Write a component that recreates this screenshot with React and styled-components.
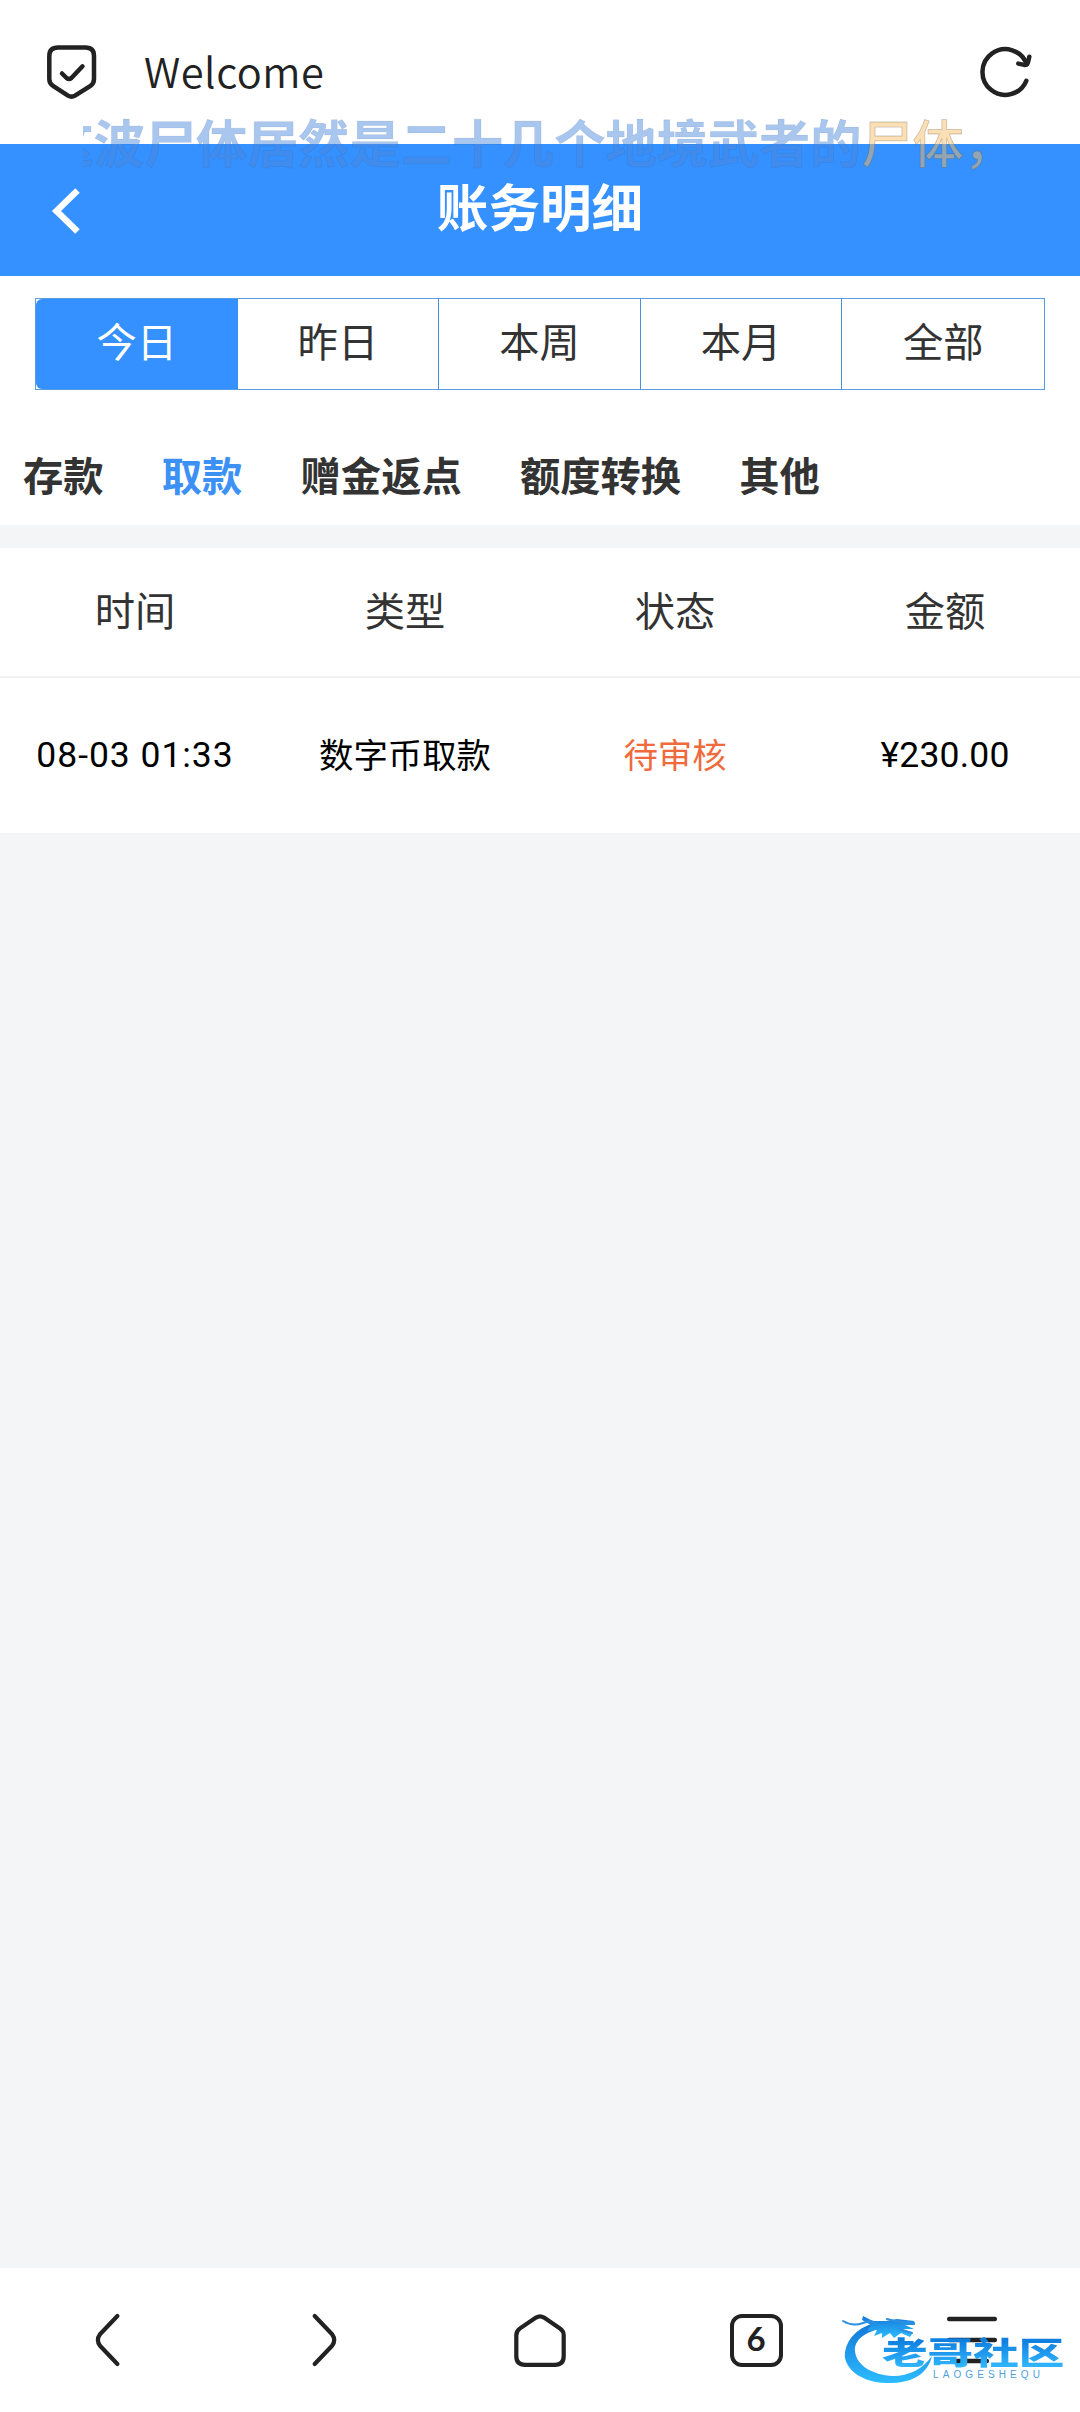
import React from "react";
import styled, { createGlobalStyle } from "styled-components";

const GlobalStyle = createGlobalStyle`
  *, *::before, *::after { box-sizing: border-box; }
  html, body { margin: 0; padding: 0; }
  body {
    background: #f4f5f7;
    font-family: "Noto Sans CJK SC", "Noto Sans", sans-serif;
    color: #333;
  }
  button { font: inherit; border: 0; padding: 0; background: none; }
`;

const INK = "#222222";
const BLUE = "#3491ff";

const Page = styled.div`
  position: relative;
  display: flex;
  flex-direction: column;
  width: 1080px;
  height: 2412px;
  overflow: hidden;
  background: #f4f5f7;
`;

const AddressBar = styled.header`
  display: flex;
  align-items: center;
  height: 144px;
  padding: 0 46px 0 44px;
  background: #fff;
`;

const SiteTitle = styled.span`
  flex: 1;
  padding: 0 0 4px 44px;
  font-size: 41.6px;
  font-weight: 350;
  line-height: 60px;
  letter-spacing: 0.5px;
  color: ${INK};
`;

const TitleBar = styled.div`
  display: grid;
  grid-template-columns: 130px 1fr 130px;
  align-items: center;
  height: 132px;
  background: ${BLUE};
`;

const BackButton = styled.button`
  display: flex;
  padding: 2px 0 0 48px;
`;

const PageTitle = styled.h1`
  margin: 0;
  padding-bottom: 11px;
  font-size: 51.6px;
  line-height: 60px;
  font-weight: 700;
  text-align: center;
  color: #fff;
`;

const Filters = styled.section`
  display: flex;
  flex-direction: column;
  height: 249px;
  padding-top: 22px;
  background: #fff;
`;

const RangeTabs = styled.div`
  display: grid;
  grid-template-columns: repeat(5, 1fr);
  height: 92px;
  margin: 0 35px;
  border: 1px solid #5a9bdc;
`;

const RangeTab = styled.button`
  padding-bottom: 8px;
  border-right: ${(p) => (p.$plain ? "0" : "1px solid #4a8fdc")};
  border-radius: ${(p) => (p.$active ? "6px 0 0 6px" : "0")};
  background: ${(p) => (p.$active ? BLUE : "#fff")};
  color: ${(p) => (p.$active ? "#fff" : "#333")};
  font-size: 40.3px;
  line-height: 60px;
`;

const CategoryTabs = styled.nav`
  display: flex;
  gap: 58.2px;
  margin-top: 54px;
  padding-left: 23px;
`;

const Category = styled.button`
  font-size: 40.3px;
  font-weight: 700;
  line-height: 60px;
  white-space: nowrap;
  color: ${(p) => (p.$active ? "#3d91f5" : "#333")};
`;

const Ledger = styled.section`
  margin-top: 23px;
  background: #fff;
`;

const LedgerRow = styled.div`
  display: grid;
  grid-template-columns: repeat(4, 270px);
  align-items: center;
  height: ${(p) => (p.$head ? "130px" : "155px")};
  padding-bottom: 6px;
  border-bottom: ${(p) => (p.$head ? "2px solid #f1f2f3" : "0")};
  font-size: ${(p) => (p.$head ? "40.3px" : "34.4px")};
  color: ${(p) => (p.$head ? "#333" : "#000")};
  text-align: center;
`;

const Cell = styled.span`
  line-height: 60px;
  white-space: nowrap;
  color: ${(p) => (p.$pending ? "#ef6a3c" : "inherit")};
`;

const Figure = styled(Cell)`
  padding-top: 5px;
  font-family: Roboto, "Noto Sans CJK SC", sans-serif;
  font-size: 35.5px;
  letter-spacing: ${(p) => p.$spacing || "0"};
`;

const BottomNav = styled.nav`
  display: grid;
  grid-template-columns: repeat(5, 1fr);
  align-items: center;
  justify-items: center;
  height: 144px;
  margin-top: auto;
  background: #fff;
`;

const NavButton = styled.button`
  display: flex;
`;

const TabCount = styled.button`
  display: flex;
  align-items: center;
  justify-content: center;
  width: 53px;
  height: 53px;
  padding-bottom: 3px;
  border: 4.5px solid ${INK};
  border-radius: 12px;
  color: ${INK};
  font-family: Lato, sans-serif;
  font-size: 33px;
  font-weight: 700;
  line-height: 1;
`;

const Ticker = styled.div`
  position: absolute;
  top: 106px;
  left: 83px;
  width: 932px;
  height: 76px;
  overflow: hidden;
  display: flex;
  justify-content: flex-end;
  font-size: 51.2px;
  line-height: 70px;
  white-space: nowrap;
  pointer-events: none;
`;

const Sung = styled.span`
  font-weight: 700;
  color: rgba(75, 135, 219, 0.48);
  -webkit-text-stroke: 0.6px rgba(40, 80, 140, 0.15);
`;

const Unsung = styled.span`
  font-weight: 500;
  color: rgba(248, 188, 100, 0.48);
  -webkit-text-stroke: 0.8px rgba(90, 80, 60, 0.3);
`;

const Watermark = styled.div`
  position: absolute;
  left: 841px;
  top: 2309px;
  width: 236px;
  height: 84px;
  pointer-events: none;
`;

const Dragon = styled.svg`
  position: absolute;
  left: 0;
  top: 0;
`;

const BrandName = styled.div`
  position: absolute;
  left: 41px;
  top: 21px;
  font-size: 31px;
  line-height: 42px;
  font-weight: 900;
  white-space: nowrap;
  transform: scaleX(1.47);
  transform-origin: 0 50%;
  background: linear-gradient(#0f7fe0 25%, #2fb4fb 85%);
  background-clip: text;
  -webkit-background-clip: text;
  color: transparent;
`;

const BrandLatin = styled.div`
  position: absolute;
  left: 92px;
  top: 60px;
  font-family: "Liberation Sans", sans-serif;
  font-size: 10px;
  line-height: 12px;
  letter-spacing: 4.1px;
  color: #4f9fdc;
`;

const stroke = {
  fill: "none",
  stroke: INK,
  strokeWidth: 4.5,
  strokeLinecap: "round",
  strokeLinejoin: "round",
};

const ShieldIcon = () => (
  <svg width="56" height="60" viewBox="44 43 56 60" {...stroke}>
    <path d="M58 48.5H85.5Q94 48.5 94 57V80Q94 84.5 90.5 86.8L75 96.6Q71.5 98.7 68 96.6L53 86.8Q49.3 84.5 49.3 80V57Q49.3 48.5 58 48.5Z" />
    <path d="M62 74.5L66.6 79Q69 81 71.4 79L82.5 67.3" />
  </svg>
);

const ReloadIcon = () => (
  <svg width="56" height="60" viewBox="978 42 56 60" {...stroke}>
    <path d="M1026.3 80.8A22.8 22.8 0 1 1 1026.8 64.5" />
    <path d="M1018.3 63.6L1024.2 64.9Q1027 65.2 1027.9 62.6L1029.3 56.8" />
  </svg>
);

const BackIcon = () => (
  <svg width="34" height="50" viewBox="48 186 34 50" fill="none" stroke="#fff" strokeWidth="6.4">
    <path d="M77.5 190.5L56.5 211L77.5 231.5" />
  </svg>
);

const PrevIcon = () => (
  <svg width="60" height="60" viewBox="0 0 60 60" {...stroke} strokeWidth="4.2">
    <path d="M39.4 6L22 24.2Q17.8 30 22 35.8L39.4 54" />
  </svg>
);

const NextIcon = () => (
  <svg width="60" height="60" viewBox="0 0 60 60" {...stroke} strokeWidth="4.2">
    <path d="M20.7 6L38.1 24.2Q42.3 30 38.1 35.8L20.7 54" />
  </svg>
);

const HomeIcon = () => (
  <svg width="60" height="60" viewBox="0 0 60 60" {...stroke} strokeWidth="4.2">
    <path d="M26 7.6Q30 5.2 34 7.6L50 18.4Q53.7 21 53.7 25.4V46Q53.7 54.8 45 54.8H15Q6.3 54.8 6.3 46V25.4Q6.3 21 10 18.4Z" />
  </svg>
);

const MenuIcon = () => (
  <svg width="60" height="60" viewBox="0 0 60 60" {...stroke}>
    <path d="M7.2 9H52.8M7.2 30H52.8M15.2 51H44.8" />
  </svg>
);

const DragonMark = () => (
  <Dragon width="100" height="84" viewBox="0 0 100 84">
    <defs>
      <linearGradient id="dragonFill" x1="0" y1="0" x2="0" y2="1">
        <stop offset="0" stopColor="#1478d8" />
        <stop offset="1" stopColor="#2cbcff" />
      </linearGradient>
    </defs>
    <g fill="url(#dragonFill)">
      <path d="M30 15C11 22 3 36 4 49C8 66 28 75 52 74C73 73 87 64 91 47C82 60 68 67 52 67C31 66 15 56 14 42C13 31 24 23 39 20Z" />
      <path d="M22 7L32 12L45 12L56 10L73 12L74 16L64 16L73 20L62 20L71 25L69 28L60 24L53 29L49 24L41 29L41 24L33 27L36 21L26 22L30 16L21 11Z" />
    </g>
    <path
      d="M2 12Q12 18 22 14T34 15M46 10Q60 14 73 14M58 20L71 24"
      fill="none"
      stroke="#2e8ee0"
      strokeWidth="2"
      strokeLinecap="round"
    />
  </Dragon>
);

const ranges = ["今日", "昨日", "本周", "本月", "全部"];
const categories = ["存款", "取款", "赠金返点", "额度转换", "其他"];
const columns = ["时间", "类型", "状态", "金额"];

export default function App() {
  return (
    <>
      <GlobalStyle />
      <Page>
        <AddressBar>
          <ShieldIcon />
          <SiteTitle>Welcome</SiteTitle>
          <ReloadIcon />
        </AddressBar>

        <TitleBar>
          <BackButton aria-label="返回">
            <BackIcon />
          </BackButton>
          <PageTitle>账务明细</PageTitle>
        </TitleBar>

        <Filters>
          <RangeTabs>
            {ranges.map((label, i) => (
              <RangeTab
                key={label}
                $plain={i === 0 || i === ranges.length - 1}
                $active={i === 0}
              >
                {label}
              </RangeTab>
            ))}
          </RangeTabs>
          <CategoryTabs>
            {categories.map((label, i) => (
              <Category key={label} $active={i === 1}>
                {label}
              </Category>
            ))}
          </CategoryTabs>
        </Filters>

        <Ledger>
          <LedgerRow $head>
            {columns.map((label) => (
              <Cell key={label}>{label}</Cell>
            ))}
          </LedgerRow>
          <LedgerRow>
            <Figure $spacing="0.95px">08-03 01:33</Figure>
            <Cell>数字币取款</Cell>
            <Cell $pending>待审核</Cell>
            <Figure $spacing="0.2px">¥230.00</Figure>
          </LedgerRow>
        </Ledger>

        <BottomNav>
          <NavButton aria-label="后退">
            <PrevIcon />
          </NavButton>
          <NavButton aria-label="前进">
            <NextIcon />
          </NavButton>
          <NavButton aria-label="主页">
            <HomeIcon />
          </NavButton>
          <TabCount>6</TabCount>
          <NavButton aria-label="菜单">
            <MenuIcon />
          </NavButton>
        </BottomNav>

        <Ticker>
          <Sung>这波尸体居然是二十几个地境武者的</Sung>
          <Unsung>尸体，</Unsung>
        </Ticker>

        <Watermark>
          <DragonMark />
          <BrandName>老哥社区</BrandName>
          <BrandLatin>LAOGESHEQU</BrandLatin>
        </Watermark>
      </Page>
    </>
  );
}
